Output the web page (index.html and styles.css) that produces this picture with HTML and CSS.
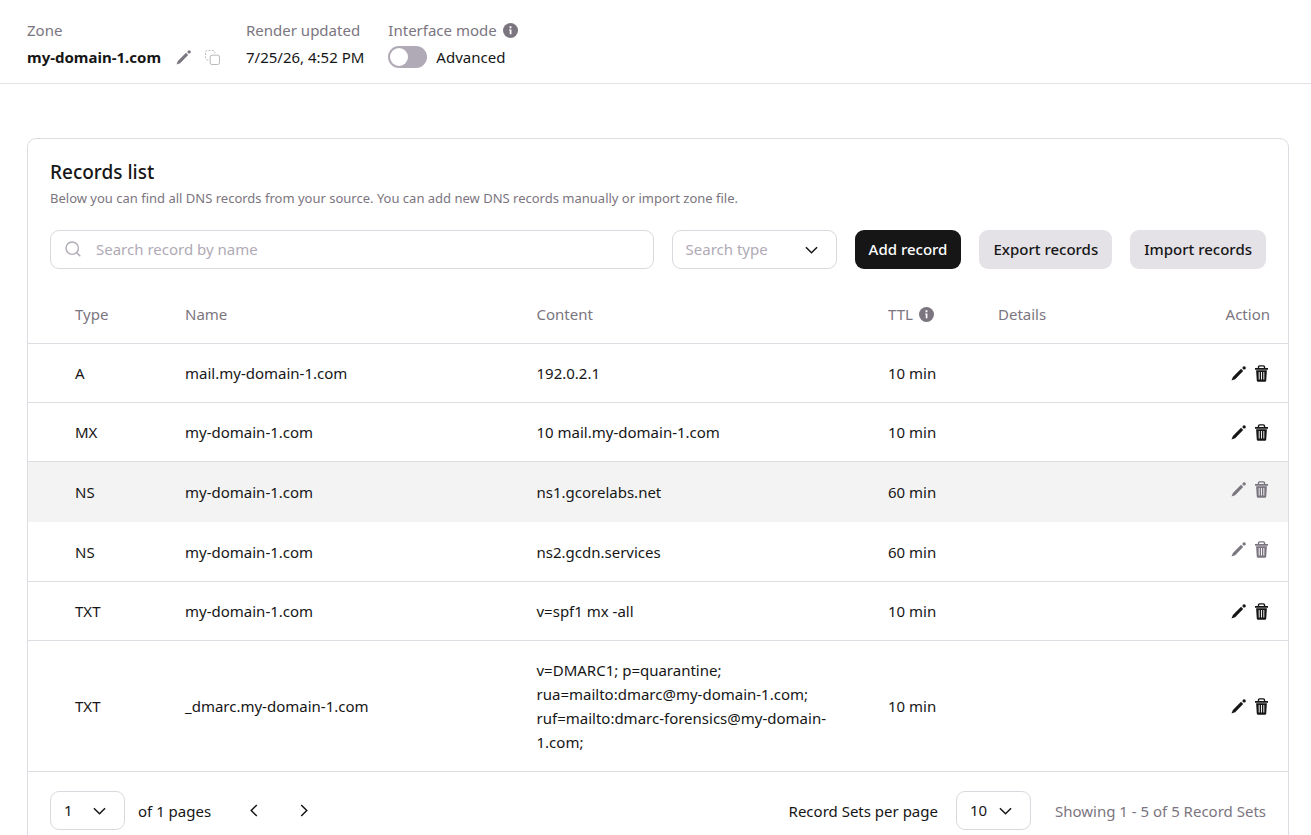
FILE: index.html
```
<!DOCTYPE html>
<html lang="en">
<head>
    <meta charset="UTF-8">
    <meta name="viewport" content="width=device-width, initial-scale=1.0">
    <title>my-domain-1.com</title>
    <link rel="stylesheet" href="styles.css">
</head>
<body>
    <svg class="sprite" aria-hidden="true">
        <symbol id="pencil" viewBox="0 0 16 16">
            <path d="M.5 15.500L2 11.600 10.700 3l2.300 2.300L4.400 14z"/>
            <circle cx="14" cy="2" r="1.800"/>
        </symbol>
        <symbol id="trash" viewBox="0 0 14 18">
            <path fill-rule="evenodd" d="M3 3V2a2 2 0 0 1 2-2h4a2 2 0 0 1 2 2v1h3v2H0V3zM4.500 3h5V2a.5.5 0 0 0-.5-.5H5A.5.5 0 0 0 4.500 2z"/>
            <path fill-rule="evenodd" d="M1.200 5.500h11.600l-.7 11a1.500 1.500 0 0 1-1.500 1.500H3.400a1.500 1.500 0 0 1-1.500-1.500zM4 7.500v8h1v-8zm2.500 0v8h1v-8zm2.500 0v8h1v-8z"/>
        </symbol>
        <symbol id="info" viewBox="0 0 16 16">
            <circle cx="8" cy="8" r="8"/>
            <path fill="#fff" d="M7 3.500h2v2H7zM6.500 7H9v5H7.200V8h-.7z"/>
        </symbol>
        <symbol id="chevron" viewBox="0 0 14 8">
            <path fill="none" stroke="currentColor" stroke-width="1.600" d="M1 1l6 6 6-6"/>
        </symbol>
    </svg>

    <header class="zone-header">
        <div class="zone-item">
            <span class="label">Zone</span>
            <div class="zone-value">
                <strong>my-domain-1.com</strong>
                <button class="icon-button zone-edit" type="button" aria-label="Edit zone"><svg class="pencil"><use href="#pencil"/></svg></button>
                <button class="icon-button zone-copy" type="button" aria-label="Copy zone name">
                    <svg class="copy" viewBox="0 0 16 16" stroke="currentColor">
                        <rect x="5.500" y="5.500" width="10" height="10" rx="2"/>
                        <path stroke-dasharray="2 1.500" d="M3.500 10.500h-1a2 2 0 0 1-2-2v-6a2 2 0 0 1 2-2h6a2 2 0 0 1 2 2v1"/>
                    </svg>
                </button>
            </div>
        </div>
        <div class="zone-item">
            <span class="label">Render updated</span>
            <div class="zone-value">7/25/26, 4:52 PM</div>
        </div>
        <div class="zone-item">
            <span class="label">Interface mode <svg class="info"><use href="#info"/></svg></span>
            <label class="zone-value switch">
                <input type="checkbox" role="switch">
                Advanced
            </label>
        </div>
    </header>

    <main class="content">
        <section class="card">
            <div class="card-top">
                <h1>Records list</h1>
                <p>Below you can find all DNS records from your source. You can add new DNS records manually or import zone file.</p>
                <div class="toolbar">
                    <label class="search">
                        <svg class="search-icon" viewBox="0 0 16 16" stroke="currentColor" stroke-width="1.400">
                            <circle cx="7.200" cy="7.200" r="6.200"/>
                            <path d="M11.800 11.800L15.300 15.300"/>
                        </svg>
                        <input type="text" placeholder="Search record by name" aria-label="Search record by name">
                    </label>
                    <div class="select type-select">
                        <select aria-label="Search type">
                            <option>Search type</option>
                            <option>A</option>
                            <option>MX</option>
                            <option>NS</option>
                            <option>TXT</option>
                        </select>
                        <svg class="chevron"><use href="#chevron"/></svg>
                    </div>
                    <button class="button primary" type="button">Add record</button>
                    <button class="button" type="button">Export records</button>
                    <button class="button" type="button">Import records</button>
                </div>
            </div>

            <table class="records">
                <colgroup>
                    <col class="col-type">
                    <col>
                    <col>
                    <col class="col-ttl">
                    <col class="col-details">
                    <col class="col-action">
                </colgroup>
                <thead>
                    <tr>
                        <th>Type</th>
                        <th>Name</th>
                        <th>Content</th>
                        <th><span class="label">TTL <svg class="info"><use href="#info"/></svg></span></th>
                        <th>Details</th>
                        <th>Action</th>
                    </tr>
                </thead>
                <tbody>
                    <tr>
                        <td>A</td>
                        <td>mail.my-domain-1.com</td>
                        <td>192.0.2.1</td>
                        <td>10 min</td>
                        <td></td>
                        <td>
                            <div class="actions">
                                <button class="icon-button" type="button" aria-label="Edit"><svg class="pencil"><use href="#pencil"/></svg></button>
                                <button class="icon-button" type="button" aria-label="Delete"><svg class="trash"><use href="#trash"/></svg></button>
                            </div>
                        </td>
                    </tr>
                    <tr>
                        <td>MX</td>
                        <td>my-domain-1.com</td>
                        <td>10 mail.my-domain-1.com</td>
                        <td>10 min</td>
                        <td></td>
                        <td>
                            <div class="actions">
                                <button class="icon-button" type="button" aria-label="Edit"><svg class="pencil"><use href="#pencil"/></svg></button>
                                <button class="icon-button" type="button" aria-label="Delete"><svg class="trash"><use href="#trash"/></svg></button>
                            </div>
                        </td>
                    </tr>
                    <tr class="locked active">
                        <td>NS</td>
                        <td>my-domain-1.com</td>
                        <td>ns1.gcorelabs.net</td>
                        <td>60 min</td>
                        <td></td>
                        <td>
                            <div class="actions">
                                <button class="icon-button" type="button" aria-label="Edit" disabled><svg class="pencil"><use href="#pencil"/></svg></button>
                                <button class="icon-button" type="button" aria-label="Delete" disabled><svg class="trash"><use href="#trash"/></svg></button>
                            </div>
                        </td>
                    </tr>
                    <tr class="locked">
                        <td>NS</td>
                        <td>my-domain-1.com</td>
                        <td>ns2.gcdn.services</td>
                        <td>60 min</td>
                        <td></td>
                        <td>
                            <div class="actions">
                                <button class="icon-button" type="button" aria-label="Edit" disabled><svg class="pencil"><use href="#pencil"/></svg></button>
                                <button class="icon-button" type="button" aria-label="Delete" disabled><svg class="trash"><use href="#trash"/></svg></button>
                            </div>
                        </td>
                    </tr>
                    <tr>
                        <td>TXT</td>
                        <td>my-domain-1.com</td>
                        <td>v=spf1 mx -all</td>
                        <td>10 min</td>
                        <td></td>
                        <td>
                            <div class="actions">
                                <button class="icon-button" type="button" aria-label="Edit"><svg class="pencil"><use href="#pencil"/></svg></button>
                                <button class="icon-button" type="button" aria-label="Delete"><svg class="trash"><use href="#trash"/></svg></button>
                            </div>
                        </td>
                    </tr>
                    <tr>
                        <td>TXT</td>
                        <td>_dmarc.my-domain-1.com</td>
                        <td>v=DMARC1; p=quarantine; rua=mailto:dmarc@my-domain-1.com; ruf=mailto:dmarc-forensics@my-domain-1.com;</td>
                        <td>10 min</td>
                        <td></td>
                        <td>
                            <div class="actions">
                                <button class="icon-button" type="button" aria-label="Edit"><svg class="pencil"><use href="#pencil"/></svg></button>
                                <button class="icon-button" type="button" aria-label="Delete"><svg class="trash"><use href="#trash"/></svg></button>
                            </div>
                        </td>
                    </tr>
                </tbody>
            </table>

            <footer class="pagination">
                <div class="pager">
                    <div class="select page-select">
                        <select id="page"><option>1</option></select>
                        <svg class="chevron"><use href="#chevron"/></svg>
                    </div>
                    <label for="page">of 1 pages</label>
                    <div class="pager-arrows">
                        <button class="icon-button" type="button" aria-label="Previous page">
                            <svg class="arrow" viewBox="0 0 8 14"><path fill="none" stroke="currentColor" stroke-width="1.600" d="M7 1L1 7l6 6"/></svg>
                        </button>
                        <button class="icon-button" type="button" aria-label="Next page">
                            <svg class="arrow" viewBox="0 0 8 14"><path fill="none" stroke="currentColor" stroke-width="1.600" d="M1 1l6 6-6 6"/></svg>
                        </button>
                    </div>
                </div>
                <div class="per-page">
                    <label for="perPage">Record Sets per page</label>
                    <div class="select page-select">
                        <select id="perPage">
                            <option>10</option>
                            <option>25</option>
                            <option>50</option>
                        </select>
                        <svg class="chevron"><use href="#chevron"/></svg>
                    </div>
                    <span class="total">Showing 1 - 5 of 5 Record Sets</span>
                </div>
            </footer>
        </section>
    </main>
</body>
</html>
```
FILE: styles.css
```
* {
    margin: 0;
    padding: 0;
    box-sizing: border-box;
}

body {
    background-color: #fff;
    color: #161616;
    font-family: "Noto Sans", sans-serif;
    font-size: 15px;
    line-height: 24px;
}

input,
select,
button {
    font: inherit;
    color: inherit;
}

svg {
    display: block;
    flex: none;
    fill: currentColor;
}

.sprite {
    display: none;
}

.label {
    display: flex;
    align-items: center;
    gap: 6px;
    color: #7b7580;
}

.info {
    width: 15px;
    height: 15px;
}

.pencil {
    width: 15px;
    height: 15px;
}

.trash {
    width: 13px;
    height: 17px;
}

.copy {
    width: 15px;
    height: 15px;
    fill: none;
}

.chevron {
    width: 13px;
    height: 8px;
}

.arrow {
    width: 8px;
    height: 13px;
}

.icon-button {
    display: flex;
    align-items: center;
    justify-content: center;
    border: none;
    background: none;
    cursor: pointer;
}

/* Zone header */
.zone-header {
    display: flex;
    gap: 24px;
    padding: 18px 27px 14px;
    border-bottom: 1px solid #e3e1e6;
}

.zone-item {
    display: flex;
    flex-direction: column;
    gap: 3px;
}

.zone-value {
    display: flex;
    align-items: center;
}

.zone-edit {
    margin-left: 15px;
    color: #7b7580;
}

.zone-copy {
    margin: 0 2px 0 14px;
    color: #b5b1b8;
}

.switch {
    gap: 9px;
    cursor: pointer;
}

.switch input {
    appearance: none;
    width: 39px;
    height: 22px;
    padding: 2px;
    border-radius: 11px;
    background-color: #b0aab6;
    cursor: pointer;
}

.switch input::before {
    content: "";
    display: block;
    width: 18px;
    height: 18px;
    border-radius: 50%;
    background-color: #fff;
}

.switch input:checked {
    background-color: #161616;
}

.switch input:checked::before {
    margin-left: auto;
}

/* Records card */
.content {
    padding: 54px 22px 22px 27px;
}

.card {
    border: 1px solid #dedce2;
    border-radius: 9px;
}

.card-top {
    padding: 20px 22px 16px;
}

.card h1 {
    margin-bottom: 1px;
    font-size: 19px;
    font-weight: 500;
    line-height: 26px;
}

.card p {
    color: #7b7580;
    font-size: 13px;
}

.toolbar {
    display: flex;
    gap: 18px;
    margin-top: 20px;
}

.search {
    display: flex;
    flex: 1;
    align-items: center;
    gap: 15px;
    height: 39px;
    padding: 0 14px 1px;
    border: 1px solid #dad8de;
    border-radius: 9px;
}

.search-icon {
    width: 16px;
    height: 16px;
    fill: none;
    color: #b0aab6;
}

.search input {
    flex: 1;
    min-width: 0;
    border: none;
    outline: none;
    background: none;
}

.search input::placeholder {
    color: #b0aab6;
}

.select {
    display: grid;
    align-items: center;
}

.select select,
.select .chevron {
    grid-area: 1 / 1;
}

.select select {
    appearance: none;
    width: 100%;
    height: 39px;
    padding: 0 13px 1px;
    border: 1px solid #dad8de;
    border-radius: 9px;
    background-color: #fff;
}

.select .chevron {
    justify-self: end;
    margin-right: 19px;
    pointer-events: none;
}

.type-select {
    width: 165px;
}

.type-select select {
    color: #b0aab6;
}

.button {
    height: 39px;
    padding: 0 14px 1px;
    border: none;
    border-radius: 9px;
    background-color: #e4e1e7;
    font-weight: 500;
    cursor: pointer;
}

.button.primary {
    background-color: #161616;
    color: #fff;
}

/* Records table */
.records {
    width: 100%;
    border-collapse: separate;
    border-spacing: 0;
    table-layout: fixed;
}

.col-type {
    width: 157px;
}

.col-ttl {
    width: 110px;
}

.col-details {
    width: 150px;
}

.col-action {
    width: 140px;
}

.records th,
.records td {
    padding: 17px 30px 17px 0;
    border-bottom: 1px solid #dedce2;
    text-align: left;
    vertical-align: middle;
}

.records th {
    color: #7b7580;
    font-weight: 400;
}

.records th:first-child,
.records td:first-child {
    padding-left: 47px;
}

.records th:last-child {
    padding-right: 18px;
    text-align: right;
}

.records td:last-child {
    padding-right: 20px;
}

.records td:nth-child(4),
.records th:nth-child(4) {
    padding-right: 0;
}

.actions {
    display: flex;
    align-items: center;
    justify-content: flex-end;
    gap: 9px;
}

.locked td {
    height: 60px;
}

.locked .actions {
    padding-bottom: 5px;
    color: #7b7580;
}

.active td {
    border-bottom-color: #f3f3f3;
    background-color: #f3f3f3;
}

/* Pagination */
.pagination {
    display: flex;
    align-items: center;
    justify-content: space-between;
    padding: 19px 22px;
}

.pager,
.per-page {
    display: flex;
    align-items: center;
}

.pager {
    gap: 13px;
}

.per-page {
    gap: 18px;
}

.page-select {
    width: 75px;
}

.pager-arrows {
    display: flex;
    gap: 42px;
    margin-left: 26px;
}

.total {
    margin-left: 6px;
    color: #7b7580;
}
```
